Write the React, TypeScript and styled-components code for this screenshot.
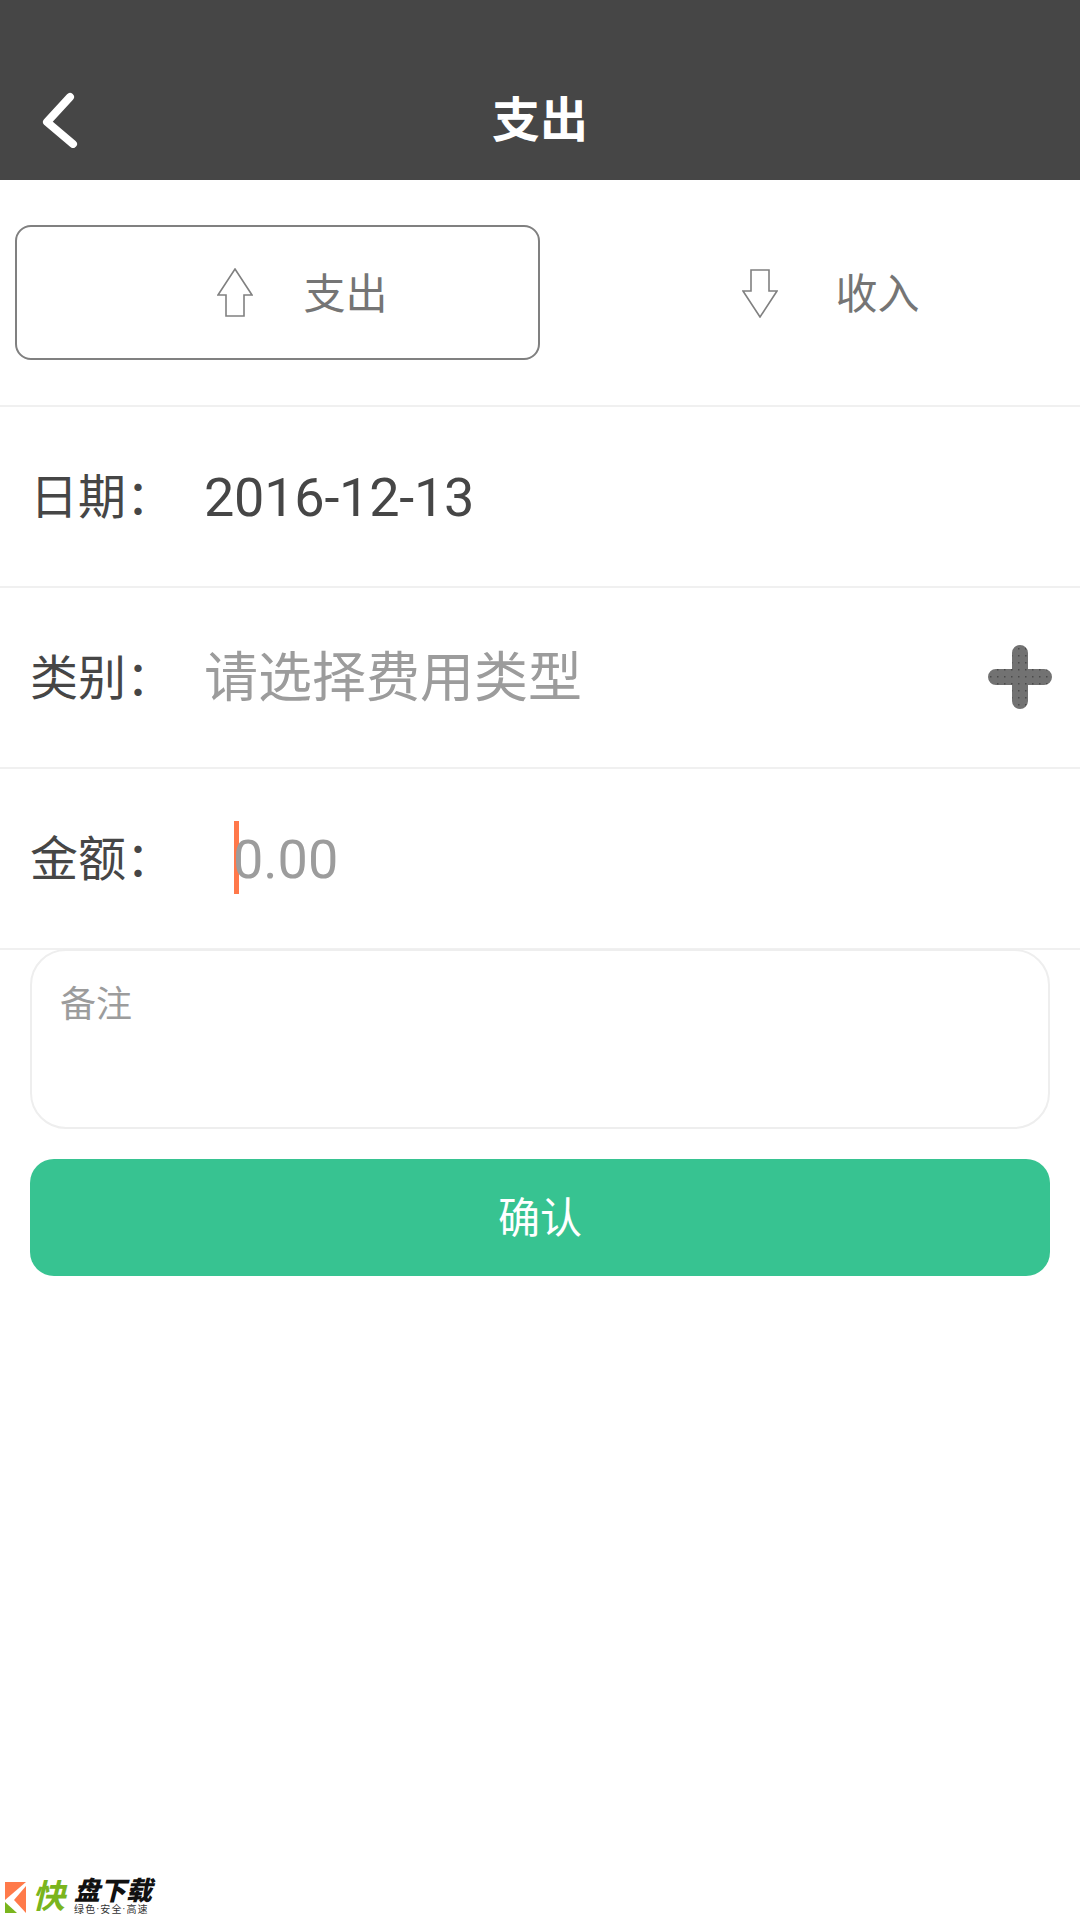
import React from 'react';
import styled, { createGlobalStyle } from 'styled-components';

const GlobalStyle = createGlobalStyle`
  html, body { margin: 0; padding: 0; background: #fff; }
  body { font-family: Roboto, "Noto Sans CJK SC", sans-serif; }
`;

const Page = styled.div`
  display: flex;
  flex-direction: column;
  width: 1080px;
  height: 1920px;
  overflow: hidden;
  background: #fff;
`;

const Header = styled.header`
  display: flex;
  align-items: center;
  justify-content: center;
  position: relative;
  box-sizing: border-box;
  height: 180px;
  padding-top: 62px;
  background: #464646;
`;

const BackIcon = styled.svg`
  position: absolute;
  left: 40px;
  top: 92px;
  width: 38px;
  height: 56px;
`;

const Title = styled.h1`
  margin: 0;
  color: #fff;
  font-size: 48px;
  font-weight: 700;
  line-height: 60px;
`;

const Tabs = styled.div`
  display: flex;
  box-sizing: border-box;
  height: 227px;
  padding: 45px 0 0 15px;
  border-bottom: 2px solid #f0f0f0;
`;

const Tab = styled.div<{ $active?: boolean; $shift: number; $gap: number }>`
  display: flex;
  align-items: center;
  justify-content: center;
  gap: ${p => p.$gap}px;
  box-sizing: border-box;
  width: 525px;
  height: 135px;
  padding: 4px 0 0 ${p => p.$shift}px;
  border: 2px solid ${p => (p.$active ? '#808080' : 'transparent')};
  border-radius: 16px;
  color: #757575;
  font-size: 42px;
  line-height: 50px;
`;

const ArrowIcon = styled.svg`
  width: 36px;
  height: 50px;
  margin-top: -4px;
  fill: none;
  stroke: #808080;
  stroke-width: 1.6;
`;

const Row = styled.div`
  display: flex;
  align-items: center;
  box-sizing: border-box;
  height: 181px;
  padding: 2px 30px 0;
  border-bottom: 2px solid #f0f0f0;
`;

const Label = styled.div`
  width: 174px;
  flex: none;
  color: #464646;
  font-size: 48px;
  line-height: 60px;
`;

const Value = styled.div<{ $muted?: boolean }>`
  flex: 1;
  color: ${p => (p.$muted ? '#9c9c9c' : '#464646')};
  font-size: 54px;
  line-height: 66px;
  letter-spacing: ${p => (p.$muted ? '0' : '-0.25px')};
`;

const AddIcon = styled.svg`
  flex: none;
  width: 64px;
  height: 64px;
  margin: -4px -2px 0 0;
`;

const AmountField = styled.div`
  display: flex;
  align-items: center;
  padding-left: 30px;
  color: #9c9c9c;
  font-size: 54px;
  line-height: 66px;
`;

const Caret = styled.span`
  width: 5px;
  height: 73px;
  margin: -4px -6px 0 0;
  background: #ff784a;
`;

const NoteBox = styled.div`
  box-sizing: border-box;
  height: 180px;
  margin: -1px 30px 0;
  padding: 32px 28px;
  border: 2px solid #eeeeee;
  border-radius: 36px;
  color: #9c9c9c;
  font-size: 36px;
  line-height: 44px;
`;

const ConfirmButton = styled.button`
  display: block;
  width: 1020px;
  height: 117px;
  margin: 30px 30px 0;
  padding: 0 0 7px;
  border: 0;
  border-radius: 24px;
  background: #37c391;
  color: #fff;
  font-family: inherit;
  font-size: 42px;
`;

const Watermark = styled.div`
  display: flex;
  align-items: center;
  margin: auto 0 5px 5px;
  height: 36px;
`;

const LogoMark = styled.svg`
  width: 21px;
  height: 31px;
  flex: none;
`;

const LogoKuai = styled.span`
  margin-left: 6px;
  color: #7ab51d;
  font-size: 33px;
  font-weight: 700;
  font-style: italic;
  line-height: 36px;
`;

const LogoText = styled.div`
  display: flex;
  flex-direction: column;
  margin-left: 9px;
`;

const LogoName = styled.span`
  color: #111;
  font-size: 26px;
  font-weight: 900;
  font-style: italic;
  line-height: 25px;
`;

const LogoSub = styled.span`
  color: #333;
  font-size: 10px;
  line-height: 11px;
  letter-spacing: 1.2px;
`;

const App = () => {
  return (
    <Page>
      <GlobalStyle />
      <Header>
        <BackIcon viewBox="0 0 38 56">
          <path d="M30 5 L7 30 L33 52" fill="none" stroke="#fff" strokeWidth="8" strokeLinecap="round" strokeLinejoin="round" />
        </BackIcon>
        <Title>支出</Title>
      </Header>

      <Tabs>
        <Tab $active $shift={50} $gap={50}>
          <ArrowIcon viewBox="0 0 36 50">
            <path d="M18 1 L35 27 L27 27 L27 48 L9 48 L9 27 L1 27 Z" />
          </ArrowIcon>
          支出
        </Tab>
        <Tab $shift={57} $gap={57}>
          <ArrowIcon viewBox="0 0 36 50">
            <path d="M18 49 L35 23 L27 23 L27 2 L9 2 L9 23 L1 23 Z" />
          </ArrowIcon>
          收入
        </Tab>
      </Tabs>

      <Row>
        <Label>日期：</Label>
        <Value>2016-12-13</Value>
      </Row>
      <Row>
        <Label>类别：</Label>
        <Value $muted>请选择费用类型</Value>
        <AddIcon viewBox="0 0 64 64">
          <defs>
            <pattern id="addDots" width="7" height="7" patternUnits="userSpaceOnUse">
              <rect width="7" height="7" fill="#727272" />
              <rect x="2" y="3" width="1.5" height="1.5" fill="#4a4a4a" />
            </pattern>
          </defs>
          <path d="M32 8 V56 M8 32 H56" stroke="url(#addDots)" strokeWidth="16" strokeLinecap="round" />
        </AddIcon>
      </Row>
      <Row>
        <Label>金额：</Label>
        <AmountField>
          <Caret />
          0.00
        </AmountField>
      </Row>

      <NoteBox>备注</NoteBox>
      <ConfirmButton>确认</ConfirmButton>

      <Watermark>
        <LogoMark viewBox="0 0 21 31">
          <path d="M0 0 H21 L0 18 Z" fill="#ff7a4a" />
          <path d="M21 4 V31 L9 18 Z" fill="#ff7a4a" />
          <path d="M0 20 L12 31 H0 Z" fill="#7ab51d" />
        </LogoMark>
        <LogoKuai>快</LogoKuai>
        <LogoText>
          <LogoName>盘下载</LogoName>
          <LogoSub>绿色·安全·高速</LogoSub>
        </LogoText>
      </Watermark>
    </Page>
  );
};

export default App;
